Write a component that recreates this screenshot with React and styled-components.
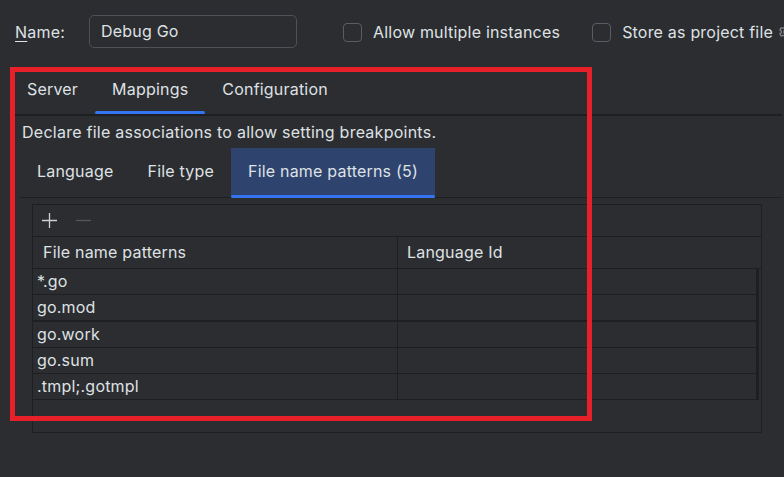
import React from "react";
import styled, { createGlobalStyle } from "styled-components";

const GlobalStyle = createGlobalStyle`
  html, body {
    margin: 0;
    padding: 0;
    background: #2b2d30;
  }
  body {
    font-family: Inter, "Noto Sans", sans-serif;
    font-size: 16px;
    letter-spacing: 0.2px;
    color: #dfe1e5;
    width: 784px;
    height: 477px;
    overflow: hidden;
  }
`;

const Page = styled.div`
  position: relative;
  width: 784px;
  height: 477px;
  overflow: hidden;
`;

const TopRow = styled.div`
  display: flex;
  align-items: center;
  height: 33px;
  padding: 15px 0 0 15px;
  white-space: nowrap;
  & > * {
    flex: none;
  }
`;

const Label = styled.span`
  width: 74px;
  padding-top: 1px;
  u {
    text-decoration-thickness: 1px;
    text-underline-offset: 3px;
  }
`;

const TextField = styled.div`
  box-sizing: border-box;
  width: 208px;
  height: 33px;
  border: 1px solid #4e5157;
  border-radius: 5px;
  padding: 0 11px 1px;
  display: flex;
  align-items: center;
`;

const CheckItem = styled.label`
  display: flex;
  align-items: center;
  gap: 11px;
  padding-top: 1px;
  margin-left: ${(p) => p.$offset}px;
`;

const Box = styled.span`
  box-sizing: border-box;
  width: 19px;
  height: 19px;
  border: 1px solid #5a5d63;
  border-radius: 4px;
`;

const Gear = styled.svg`
  margin-left: -6px;
  flex: none;
`;

const TabBar = styled.div`
  display: flex;
  margin: 19px 2px 0 ${(p) => p.$left}px;
  height: ${(p) => p.$height}px;
  border-bottom: ${(p) => p.$line}px solid #1e1f22;
`;

const Tab = styled.div`
  position: relative;
  display: flex;
  align-items: center;
  padding: 0 17px 4px;
  background: ${(p) => (p.$filled && p.$active ? "#2e436e" : "transparent")};
  &::after {
    content: "";
    display: ${(p) => (p.$active ? "block" : "none")};
    position: absolute;
    left: 0;
    right: 0;
    bottom: ${(p) => (p.$filled ? "-1px" : "0")};
    height: 3px;
    border-radius: 2px;
    background: #3574f0;
  }
`;

const SubTabs = styled(TabBar)`
  margin-top: 7px;
`;

const Description = styled.div`
  padding: 7px 0 0 22px;
  line-height: 18px;
  letter-spacing: 0.25px;
`;

const TablePanel = styled.div`
  box-sizing: border-box;
  margin: 6px 0 0 32px;
  width: 730px;
  height: 229px;
  border: 1px solid #1e1f22;
  display: flex;
  flex-direction: column;
`;

const Toolbar = styled.div`
  display: flex;
  align-items: center;
  gap: 17px;
  height: 31px;
  padding-left: 8px;
  border-bottom: 1px solid #1e1f22;
`;

const ToolIcon = styled.svg`
  display: block;
`;

const Grid = styled.div`
  display: grid;
  grid-template-columns: 364px 1fr;
`;

const HeaderCell = styled.div`
  height: 30px;
  display: flex;
  align-items: center;
  padding: 0 0 1px ${(p) => (p.$first ? 10 : 9)}px;
  border-bottom: 1px solid #1e1f22;
  border-left: ${(p) => (p.$first ? "none" : "1px solid #1e1f22")};
`;

const Rows = styled.div`
  display: flex;
  flex-direction: column;
  margin-right: 2px;
  border-right: 3px solid #1e1f22;
`;

const Row = styled.div`
  display: grid;
  grid-template-columns: 364px 1fr;
  height: 25px;
  border-bottom: ${(p) => p.$line}px solid #1e1f22;
`;

const Cell = styled.div`
  display: flex;
  align-items: center;
  padding: 0 0 2px 4px;
  & + & {
    border-left: 1px solid #1e1f22;
  }
`;

const Highlight = styled.div`
  position: absolute;
  left: 10px;
  top: 67px;
  width: 582px;
  height: 354px;
  box-sizing: border-box;
  border: 5px solid #e8202a;
  pointer-events: none;
`;

const ROWS = [
  { name: "*.go", line: 1 },
  { name: "go.mod", line: 2 },
  { name: "go.work", line: 1 },
  { name: "go.sum", line: 1 },
  { name: ".tmpl;.gotmpl", line: 1 },
];

export default function App() {
  return (
    <Page>
      <GlobalStyle />
      <TopRow>
        <Label>
          <u>N</u>ame:
        </Label>
        <TextField>Debug Go</TextField>
        <CheckItem $offset={46}>
          <Box />
          Allow multiple instances
        </CheckItem>
        <CheckItem $offset={32}>
          <Box />
          Store as project file
          <Gear width="16" height="16" viewBox="0 0 16 16" fill="none" stroke="#80848b" strokeWidth="1.3">
            <circle cx="8" cy="8" r="2.2" />
            <path d="M6.8 1.5h2.4l.4 1.9 1.5.8 1.8-.7 1.2 2.1-1.4 1.3v1.7l1.4 1.3-1.2 2.1-1.8-.7-1.5.8-.4 1.9H6.8l-.4-1.9-1.5-.8-1.8.7-1.2-2.1L3.3 8.8V7.1L1.9 5.8l1.2-2.1 1.8.7 1.5-.8z" />
          </Gear>
        </CheckItem>
      </TopRow>

      <TabBar $left={10} $height={47} $line={2}>
        <Tab>Server</Tab>
        <Tab $active>Mappings</Tab>
        <Tab>Configuration</Tab>
      </TabBar>

      <Description>Declare file associations to allow setting breakpoints.</Description>

      <SubTabs $left={20} $height={49} $line={1}>
        <Tab>Language</Tab>
        <Tab>File type</Tab>
        <Tab $filled $active>
          File name patterns (5)
        </Tab>
      </SubTabs>

      <TablePanel>
        <Toolbar>
          <ToolIcon width="17" height="17" viewBox="0 0 17 17" stroke="#ced0d6" strokeWidth="1.3">
            <path d="M8.5 1v15M1 8.5h15" />
          </ToolIcon>
          <ToolIcon width="17" height="17" viewBox="0 0 17 17" stroke="#55585e" strokeWidth="1.3">
            <path d="M1 8.5h15" />
          </ToolIcon>
        </Toolbar>
        <Grid>
          <HeaderCell $first>File name patterns</HeaderCell>
          <HeaderCell>Language Id</HeaderCell>
        </Grid>
        <Rows>
          {ROWS.map((row) => (
            <Row key={row.name} $line={row.line}>
              <Cell>{row.name}</Cell>
              <Cell />
            </Row>
          ))}
        </Rows>
      </TablePanel>

      <Highlight />
    </Page>
  );
}
